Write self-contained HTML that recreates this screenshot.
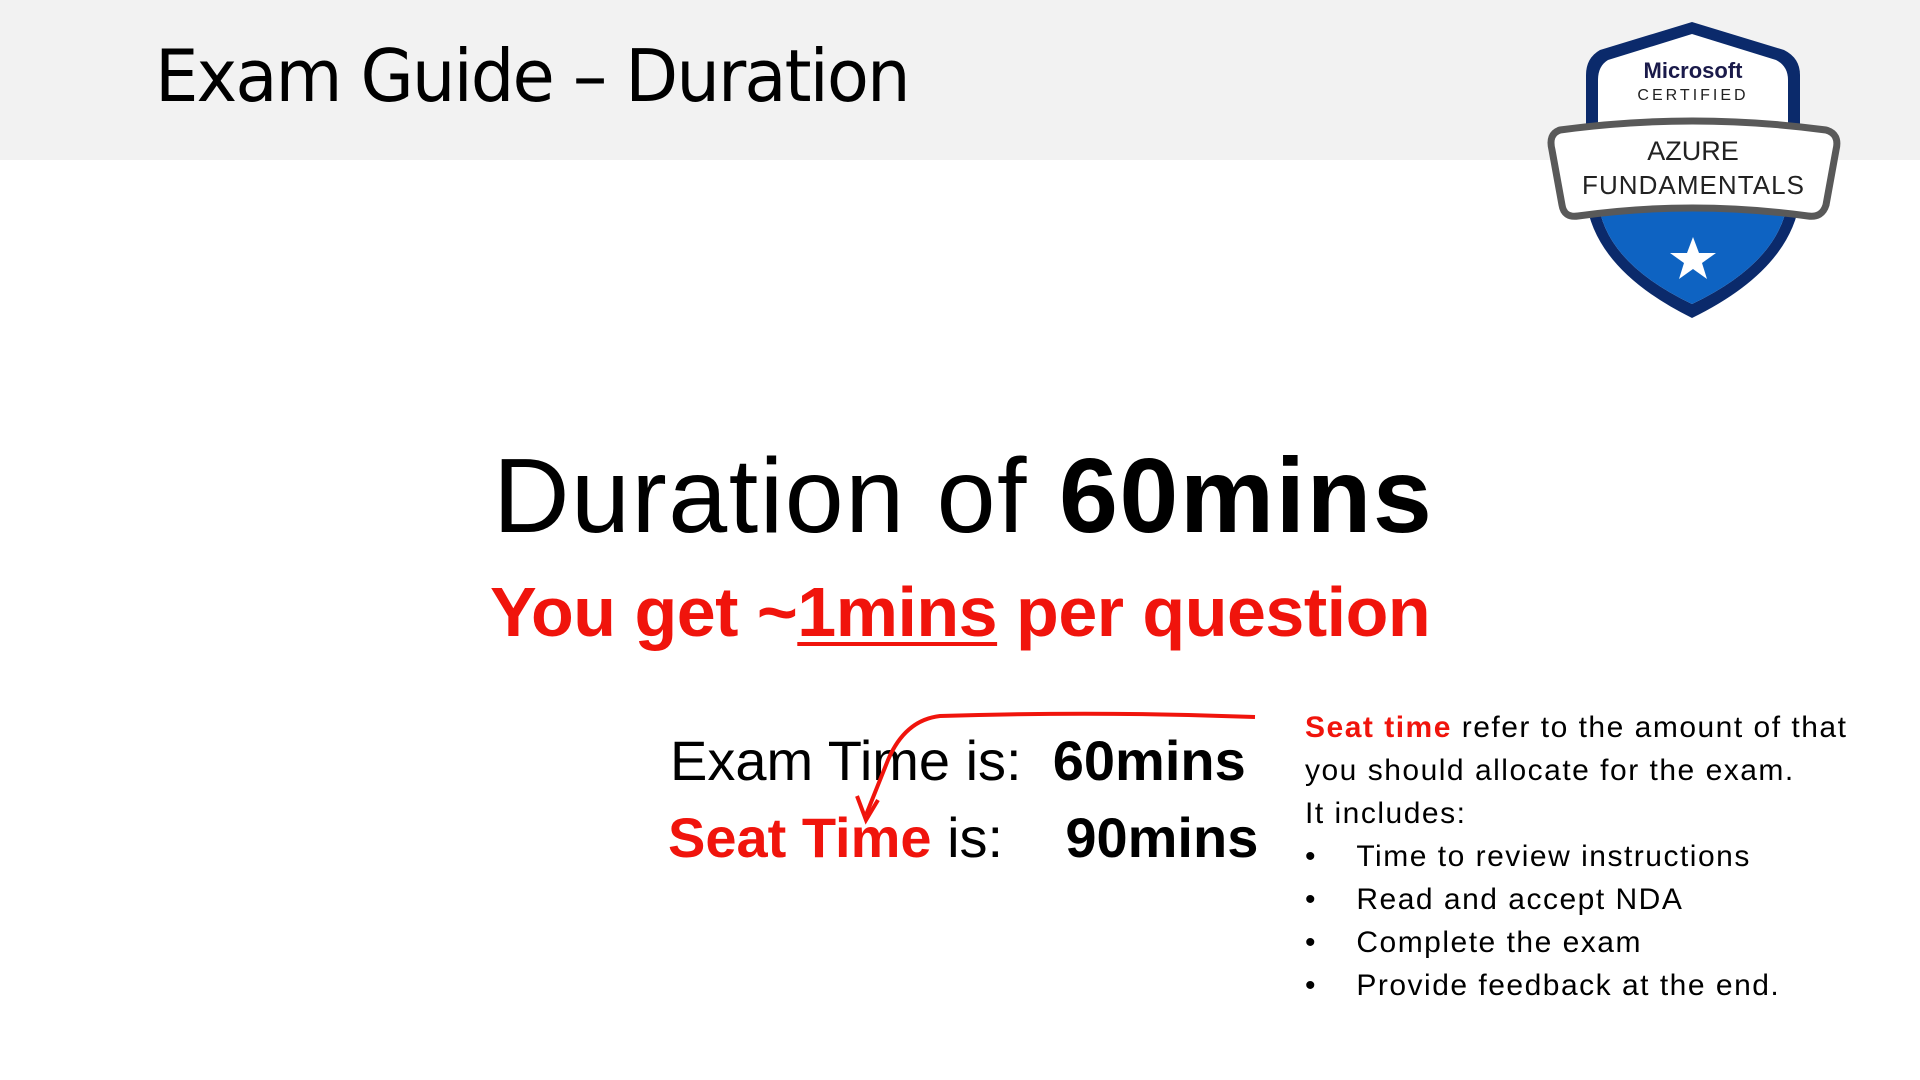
<!DOCTYPE html>
<html><head><meta charset="utf-8"><style>
body{margin:0;width:1920px;height:1080px;background:#fff;position:relative;overflow:hidden;font-family:"Liberation Sans",sans-serif;color:#000}
.hdr{position:absolute;left:0;top:0;width:1920px;height:160px;background:#f2f2f2}
.t{position:absolute;white-space:nowrap;line-height:1}
.r{color:#f0140c}
</style></head><body>
<div class="hdr"></div>
<div class="t" style="left:155px;top:40px;font-size:72px;font-family:'DejaVu Sans',sans-serif;font-weight:normal;letter-spacing:-2px;transform:scaleX(0.955);transform-origin:left">Exam Guide – Duration</div>

<svg style="position:absolute;left:1540px;top:15px" width="310" height="310" viewBox="1540 15 310 310">
<path d="M1600,50 L1692,22 L1784,50 Q1800,58 1800,75 L1800,200 Q1790,270 1692,318 Q1595,270 1586,200 L1586,75 Q1586,58 1600,50Z" fill="#0b2a6b"/>
<path d="M1608,60 L1692,34 L1776,60 Q1788,66 1788,80 L1788,200 Q1780,262 1692,304 Q1604,262 1598,200 L1598,80 Q1598,66 1608,60Z" fill="#fff"/>
<path d="M1598,200 L1788,200 Q1780,262 1692,304 Q1604,262 1598,200Z" fill="#0e63c2"/>
<path d="M1598,170 L1788,170 L1788,205 L1598,205Z" fill="#0e63c2"/>
<path d="M1560,130 Q1692,112 1826,130 Q1840,134 1836,150 L1826,205 Q1822,218 1808,216 Q1692,200 1578,216 Q1564,218 1562,205 L1552,150 Q1548,134 1560,130Z" fill="#fff" stroke="#595959" stroke-width="7"/>
<text x="1693" y="78" text-anchor="middle" font-family="Liberation Sans" font-weight="bold" font-size="22" fill="#1a1a4a">Microsoft</text>
<text x="1693" y="100" text-anchor="middle" font-family="Liberation Sans" font-size="16" letter-spacing="3" fill="#222">CERTIFIED</text>
<text x="1693" y="160" text-anchor="middle" font-family="Liberation Sans" font-size="27" fill="#222">AZURE</text>
<text x="1693" y="194" text-anchor="middle" font-family="Liberation Sans" font-size="26" fill="#222" textLength="222">FUNDAMENTALS</text>
<polygon points="1693,237 1699,253 1716,253 1702,263 1707,279 1693,269 1679,279 1684,263 1670,253 1687,253" fill="#fff"/>
</svg>

<div class="t" style="left:493px;top:443px;font-size:106px;letter-spacing:1.5px">Duration of <b>60mins</b></div>
<div class="t r" style="left:490px;top:577px;font-size:70px;font-weight:bold;letter-spacing:-0.5px">You get ~<span style="text-decoration:underline;text-decoration-thickness:4px;text-underline-offset:6px">1mins</span> per question</div>

<div class="t" style="left:670px;top:733px;font-size:56px">Exam Time is:&nbsp; <b>60mins</b></div>
<div class="t" style="left:668px;top:810px;font-size:56px"><b class="r">Seat Time</b> is:&nbsp;&nbsp;&nbsp; <b>90mins</b></div>

<svg style="position:absolute;left:0;top:0" width="1920" height="1080">
<path d="M1255,717 Q1100,711 940,716 Q905,720 888,760 L866,815" fill="none" stroke="#f0140c" stroke-width="4"/>
<path d="M857,796 L866,820 L878,800" fill="none" stroke="#f0140c" stroke-width="4"/>
</svg>

<div style="position:absolute;left:1305px;top:706px;font-size:30px;line-height:43px;white-space:nowrap;letter-spacing:1.5px">
<div><b class="r">Seat time</b> refer to the amount of that</div>
<div>you should allocate for the exam.</div>
<div>It includes:</div>
<div>•&nbsp;&nbsp;&nbsp;&nbsp;Time to review instructions</div>
<div>•&nbsp;&nbsp;&nbsp;&nbsp;Read and accept NDA</div>
<div>•&nbsp;&nbsp;&nbsp;&nbsp;Complete the exam</div>
<div>•&nbsp;&nbsp;&nbsp;&nbsp;Provide feedback at the end.</div>
</div>
</body></html>
